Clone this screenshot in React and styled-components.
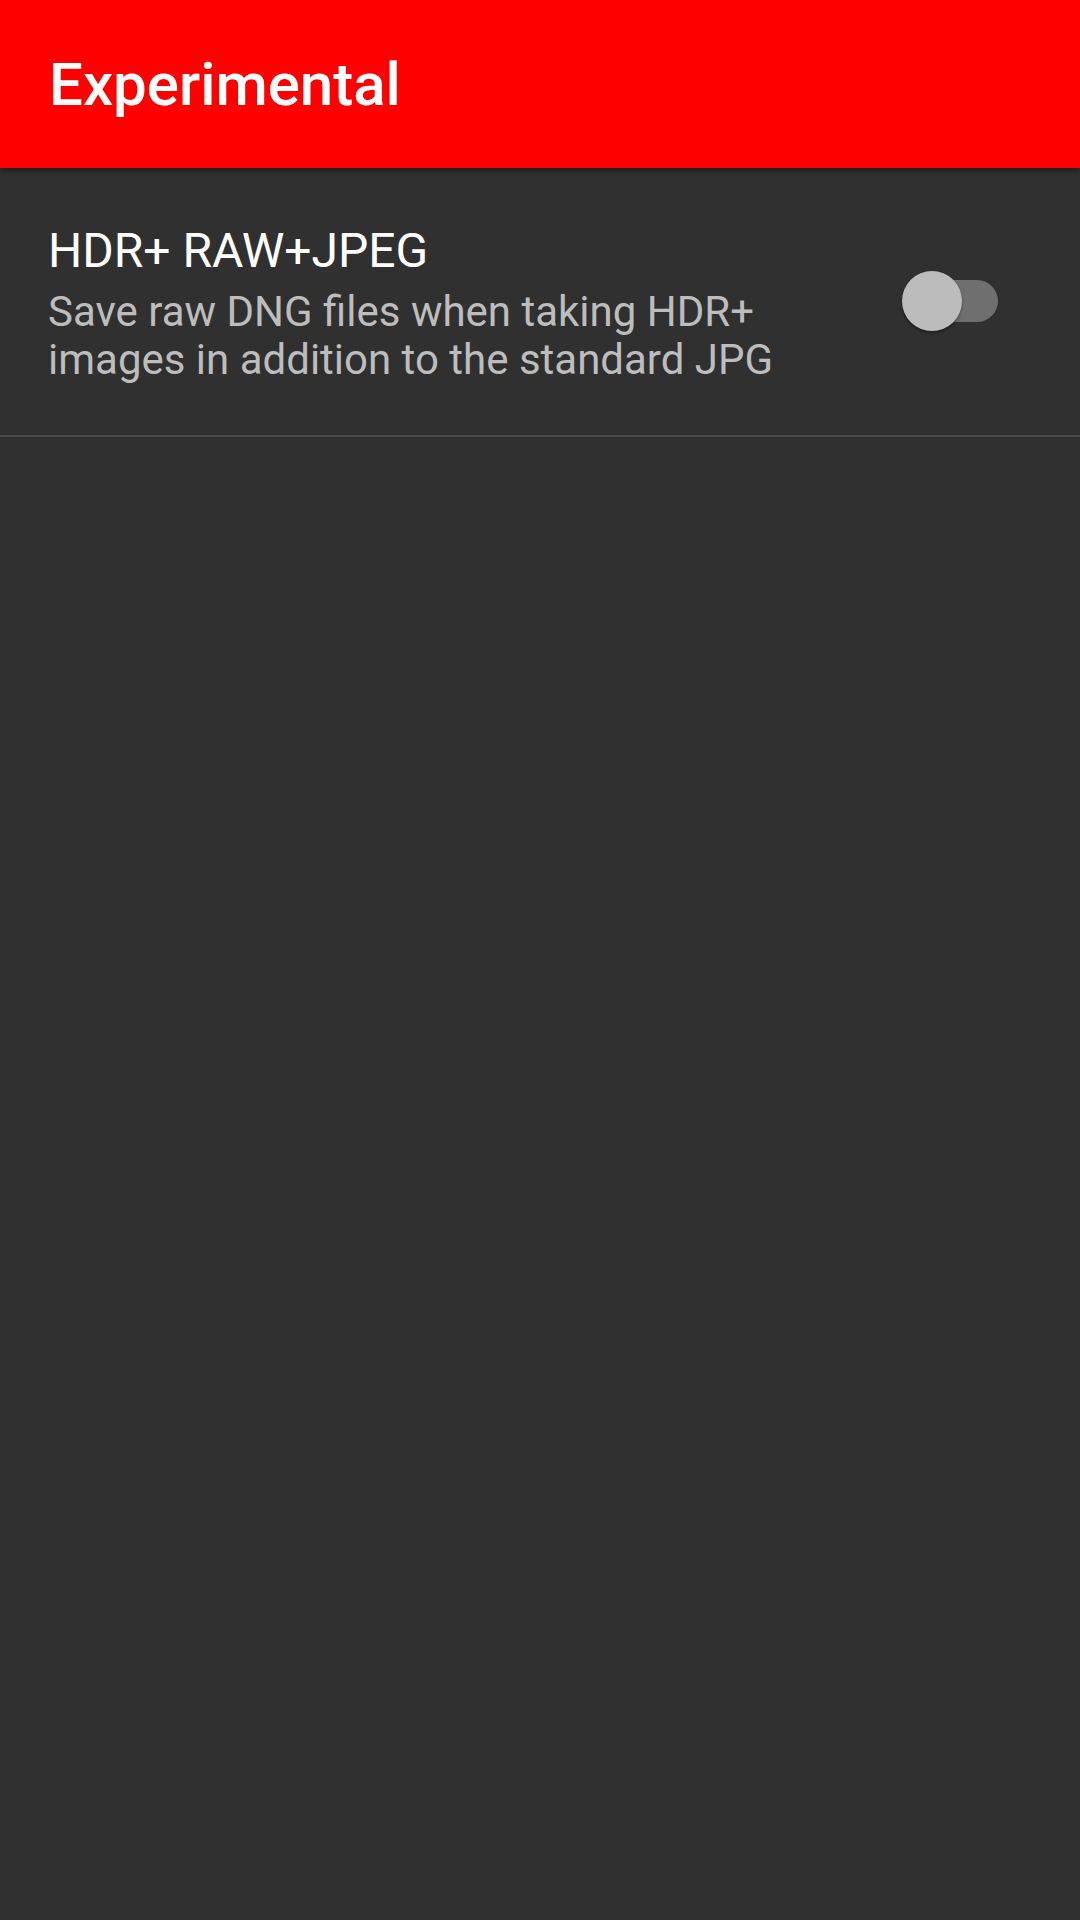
import React, { useState } from 'react';
import styled, { createGlobalStyle } from 'styled-components';

const GlobalStyle = createGlobalStyle`
    html, body {
        margin: 0;
        padding: 0;
        background: #303030;
    }

    body {
        font-family: Roboto, "Noto Sans", "Liberation Sans", sans-serif;
        -webkit-font-smoothing: antialiased;
    }
`;

const Screen = styled.div`
    display: flex;
    flex-direction: column;
    width: 1080px;
    min-height: 1920px;
    background: #303030;
`;

const Toolbar = styled.header`
    position: relative;
    z-index: 1;
    display: flex;
    align-items: center;
    height: 168px;
    padding-left: 49px;
    background: #ff0000;
    box-shadow: 0 3px 6px rgba(0, 0, 0, .35);

    h1 {
        margin: 0;
        font-size: 60px;
        font-weight: 500;
        color: #fff;
        letter-spacing: 0;
    }
`;

const Pref = styled.div`
    display: flex;
    align-items: center;
    padding: 55px 82px 51px 48px;
    border-bottom: 2px solid #4a4a4a;

    .textWrap {
        flex: 1;
        max-width: 780px;
    }

    h3 {
        margin: 0 0 9px;
        font-size: 48px;
        line-height: 56px;
        font-weight: 400;
        color: #fff;
    }

    p {
        margin: 0;
        font-size: 42px;
        line-height: 48px;
        color: #bdbdbd;
    }
`;

const Switch = styled.button`
    position: relative;
    margin: 0 0 5px auto;
    width: 96px;
    height: 60px;
    padding: 0;
    border: 0;
    background: transparent;

    &::before {
        content: '';
        position: absolute;
        right: 0;
        top: 9px;
        width: 89px;
        height: 42px;
        border-radius: 21px;
        background: ${props => props.on ? '#ff7f7f' : '#6f6f6f'};
    }

    &::after {
        content: '';
        position: absolute;
        top: 0;
        left: ${props => props.on ? '36px' : '0'};
        width: 60px;
        height: 60px;
        border-radius: 50%;
        background: ${props => props.on ? '#ff0000' : '#bcbcbc'};
        box-shadow: 0 2px 3px rgba(0, 0, 0, .35);
    }
`;

export default function App() {
    const [raw, setRaw] = useState(false);

    return (
        <Screen>
            <GlobalStyle />
            <Toolbar>
                <h1>Experimental</h1>
            </Toolbar>
            <Pref>
                <div className="textWrap">
                    <h3>HDR+ RAW+JPEG</h3>
                    <p>Save raw DNG files when taking HDR+ images in addition to the standard JPG</p>
                </div>
                <Switch on={raw ? 1 : 0} onClick={() => setRaw(!raw)} aria-label="HDR+ RAW+JPEG" />
            </Pref>
        </Screen>
    );
}
